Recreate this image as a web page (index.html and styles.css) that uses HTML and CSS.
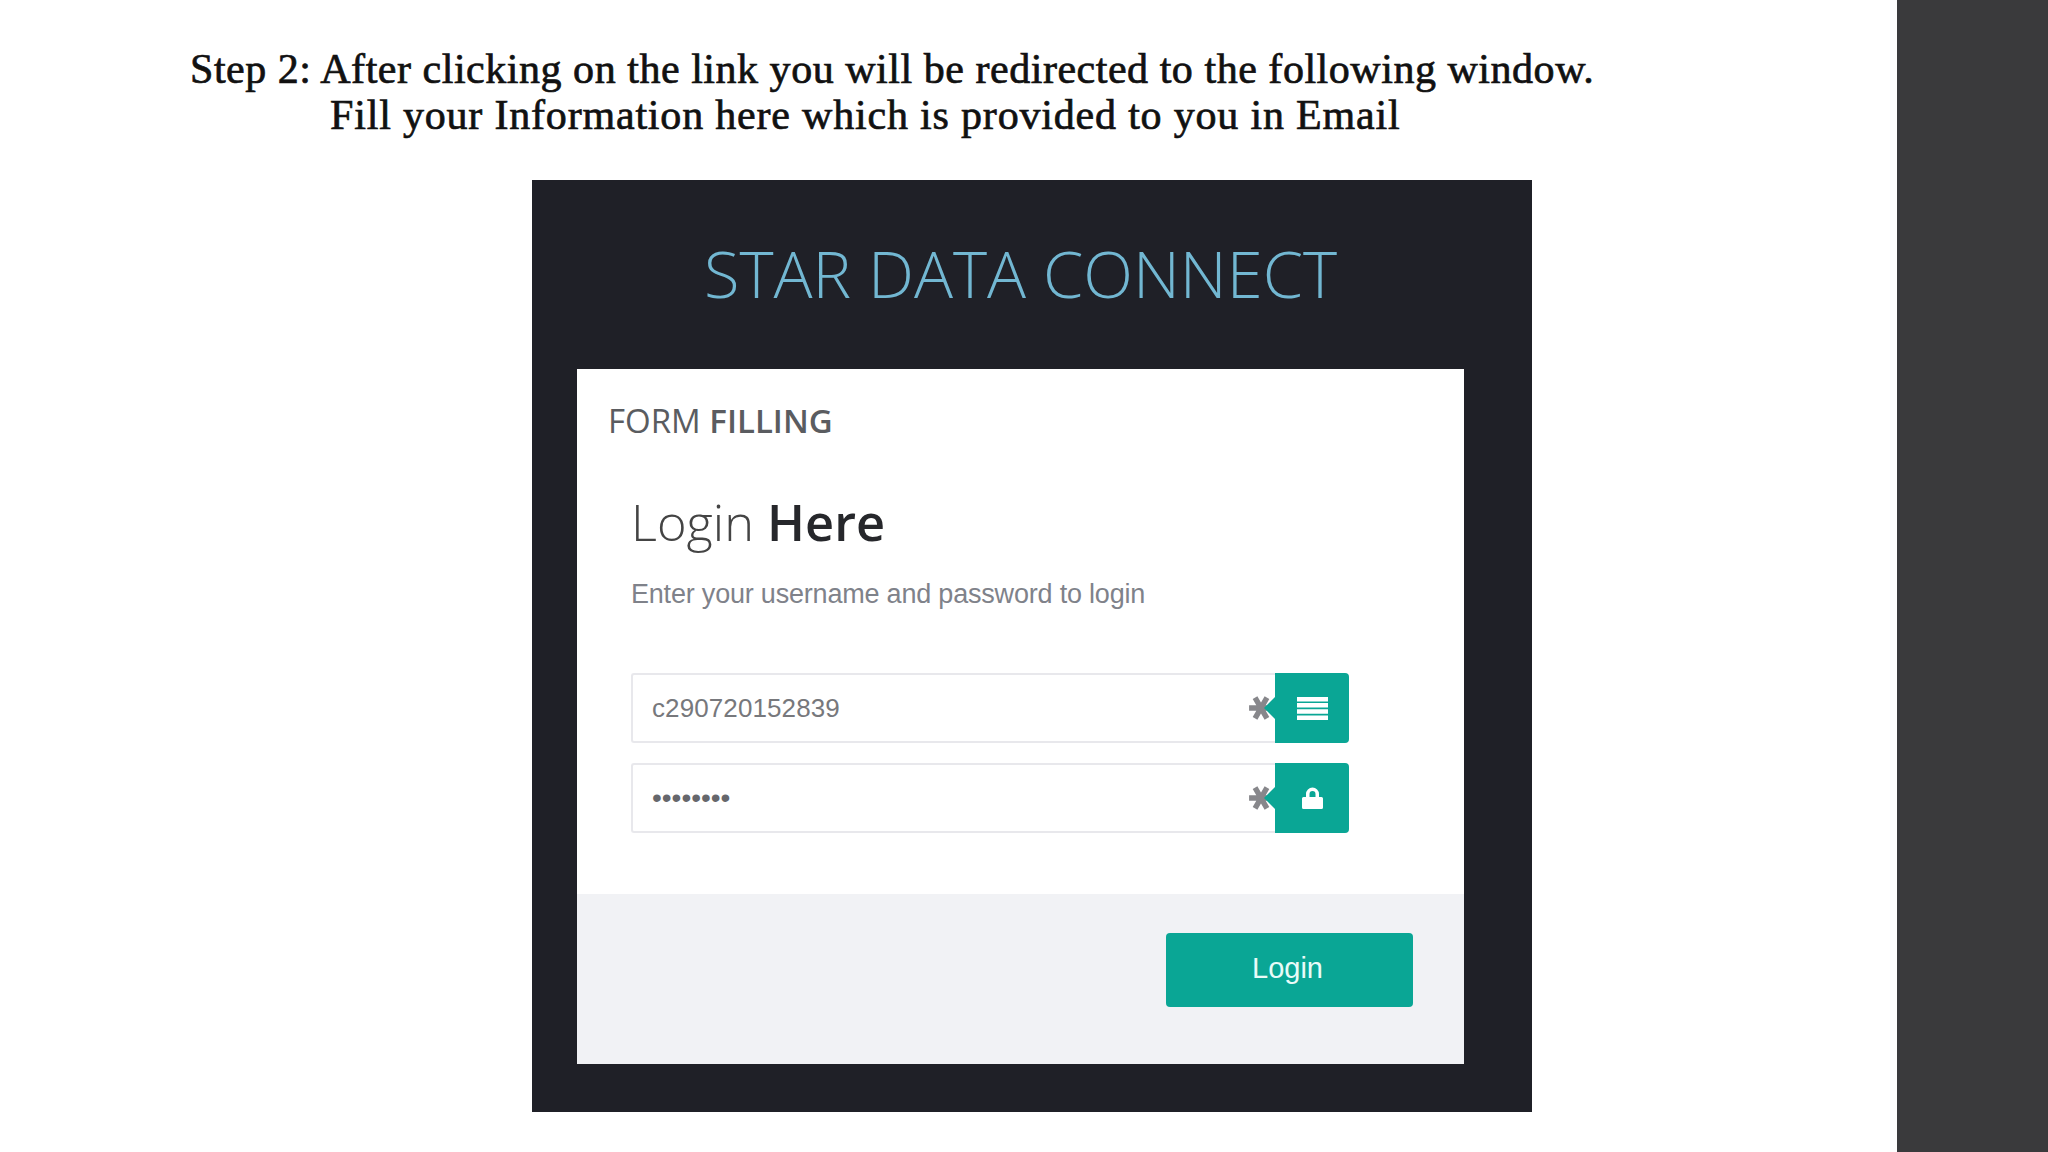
FILE: index.html
```html
<!DOCTYPE html>
<html lang="en">
<head>
<meta charset="utf-8">
<title>Step 2</title>
<link rel="stylesheet" href="styles.css">
</head>
<body>
<div class="slide">
  <main class="page">
    <div class="step">
      <p class="step-line">Step 2: After clicking on the link you will be redirected to the following window.</p>
      <p class="step-line step-indent">Fill your Information here which is provided to you in Email</p>
    </div>
    <section class="panel">
      <h1 class="brand">STAR DATA CONNECT</h1>
      <div class="card">
        <div class="card-body">
          <h2 class="form-title">FORM <b>FILLING</b></h2>
          <div class="login-area">
            <h3 class="login-title">Login <b>Here</b></h3>
            <p class="login-sub">Enter your username and password to login</p>
            <div class="fields">
              <div class="field">
                <div class="input">
                  <span class="value">c290720152839</span>
                  <svg class="req" viewBox="0 0 24 24"><path d="M1 12H23M6.500 2.500L17.500 21.500M17.500 2.500L6.500 21.500"/></svg>
                </div>
                <div class="addon">
                  <svg class="ic-lines" viewBox="0 0 31 23"><path d="M0 0H31V4.500H0ZM0 6H31V10.500H0ZM0 12.200H31V16.700H0ZM0 18.500H31V23H0Z"/></svg>
                </div>
              </div>
              <div class="field">
                <div class="input">
                  <span class="value dots">••••••••</span>
                  <svg class="req" viewBox="0 0 24 24"><path d="M1 12H23M6.500 2.500L17.500 21.500M17.500 2.500L6.500 21.500"/></svg>
                </div>
                <div class="addon">
                  <svg class="ic-lock" viewBox="0 0 21 22"><path fill-rule="evenodd" d="M4 10V7A6.500 6.500 0 0 1 17 7V10H19.500Q21 10 21 11.500V20.500Q21 22 19.500 22H1.500Q0 22 0 20.500V11.500Q0 10 1.500 10ZM7.500 10H13.500V7A3 3 0 0 0 7.500 7Z"/></svg>
                </div>
              </div>
            </div>
          </div>
        </div>
        <div class="card-foot">
          <button class="login-btn" type="button">Login</button>
        </div>
      </div>
    </section>
  </main>
  <aside class="rail"></aside>
</div>
</body>
</html>
```
FILE: styles.css
```css
* { box-sizing: border-box; }
html, body { margin: 0; padding: 0; }
body { width: 2048px; height: 1152px; overflow: hidden; background: #fff; }
.slide { display: flex; height: 1152px; }
.page { width: 1897px; flex: none; }
.rail { flex: 1; background: #3a3a3c; }

.step { padding: 46px 0 0 190px; height: 180px; }
.step-line {
  margin: 0;
  font: 400 42px/46px "Liberation Serif", serif;
  color: #111;
  white-space: nowrap;
  letter-spacing: 0.53px;
  -webkit-text-stroke: 0.7px #111;
}
.step-indent { padding-left: 140px; letter-spacing: 0.81px; }

.panel {
  margin-left: 532px;
  width: 1000px;
  height: 932px;
  background: #1f2027;
  padding-left: 45px;
  display: flex;
  flex-direction: column;
}
.brand {
  margin: 0;
  width: 887px;
  height: 187px;
  flex: none;
  display: flex;
  align-items: center;
  justify-content: center;
  font: 300 65px/1 "Open Sans", sans-serif;
  color: #72b7d2;
  margin-bottom: 2px;
}
.card { width: 887px; height: 695px; background: #fff; display: flex; flex-direction: column; }
.card-body { flex: 1; padding: 29px 0 0 31px; }
.form-title {
  margin: 0;
  font: 400 33px/45px "Open Sans", sans-serif;
  color: #5a5c60;
}
.form-title b { font-weight: 600; }
.login-area { padding: 44px 0 0 23px; width: 741px; }
.login-title {
  margin: 0;
  font: 300 50.500px/70px "Open Sans", sans-serif;
  color: #444;
}
.login-title b { font-weight: 600; color: #26272b; }
.login-sub {
  margin: 19px 0 0;
  font: 400 27px/36px "Liberation Sans", sans-serif;
  color: #7f828a;
  letter-spacing: -0.2px;
}
.fields { margin-top: 61px; display: flex; flex-direction: column; gap: 20px; }
.field { display: flex; height: 70px; }
.input {
  flex: 1;
  display: flex;
  align-items: center;
  justify-content: space-between;
  padding: 0 1px 0 19px;
  border: 2px solid #e8e8ec;
  border-right: 0;
  border-radius: 3px 0 0 3px;
}
.value { font: 400 26px/1 "Liberation Sans", sans-serif; color: #77787c; letter-spacing: 0.1px; }
.dots { font-size: 28px; color: #66676c; letter-spacing: 0; }
.req { width: 26px; height: 26px; fill: none; stroke: #87878b; stroke-width: 5; }
.addon {
  position: relative;
  flex: none;
  width: 74px;
  background: #0aa695;
  border-radius: 0 4px 4px 0;
  display: flex;
  align-items: center;
  justify-content: center;
}
.addon::before {
  content: "";
  position: absolute;
  left: -11px;
  top: 50%;
  margin-top: -11px;
  border-style: solid;
  border-width: 11px 11px 11px 0;
  border-color: transparent #0aa695 transparent transparent;
}
.ic-lines { width: 31px; height: 23px; fill: #fff; margin-left: 1px; }
.ic-lock { width: 21px; height: 22px; fill: #fff; margin-left: 1px; }
.card-foot {
  height: 170px;
  flex: none;
  background: #f1f2f5;
  display: flex;
  justify-content: flex-end;
  padding: 39px 51px 0 0;
}
.login-btn {
  width: 247px;
  height: 74px;
  border: 0;
  border-radius: 4px;
  background: #0aa695;
  color: #e9fbf8;
  font: 400 29px/1 "Liberation Sans", sans-serif;
  padding: 0 4px 4px 0;
}
```
